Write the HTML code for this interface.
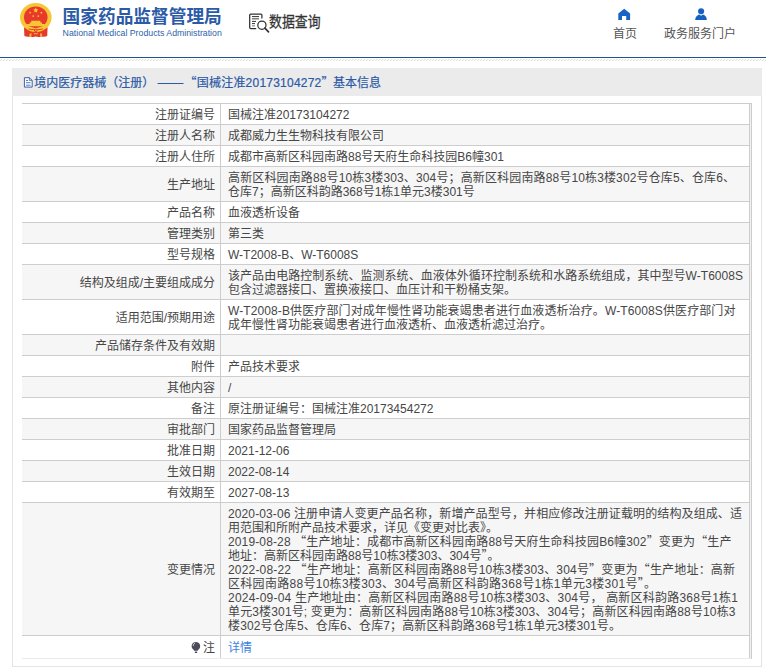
<!DOCTYPE html>
<html lang="zh-CN">
<head>
<meta charset="utf-8">
<title>国家药品监督管理局 数据查询</title>
<style>
html,body{margin:0;padding:0;background:#fff}
body{position:relative;width:766px;height:671px;overflow:hidden;font-family:"Liberation Sans",sans-serif;font-size:12px;line-height:14px;color:transparent}
a{color:transparent;text-decoration:none}
.hd{position:absolute;left:0;top:0;width:766px;height:57px;overflow:hidden;white-space:nowrap}
.hd .logo{position:absolute;left:63px;top:6px;font-size:17px;line-height:20px;font-weight:bold;width:160px;height:20px;overflow:hidden}
.hd .sub{position:absolute;left:62.4px;top:27.8px;font-size:8.8px;line-height:11px;width:159px;height:11px;overflow:hidden}
.hd .dq{position:absolute;left:269px;top:14px;font-size:14px;line-height:16px;width:54px;height:16px;overflow:hidden}
.hd .nav{position:absolute;top:27px;height:14px;overflow:hidden;text-align:center}
.rule{position:absolute;left:0;top:57px;width:766px;height:1px;background:#24528f}
.box{position:absolute;left:12px;top:68px;width:748px;height:598px;border:1px solid #e4e4e4;border-top:0;background:#fff}
.bar{position:absolute;left:-1px;top:0;width:750px;height:27.5px;background:#ebebeb;overflow:hidden;white-space:nowrap}
.bar h1{margin:0;padding:9px 0 0 22px;font-size:12px;line-height:14px;font-weight:normal;height:14px;overflow:hidden}
table{position:absolute;left:9px;top:35px;width:728px;border-collapse:separate;border-spacing:0;table-layout:fixed;border-bottom:1px solid #ebebeb}
th,td{box-sizing:border-box;border-top:1px solid #cdcdcd;border-right:1px solid #cdcdcd;padding:0 5px;font-weight:normal;overflow:hidden;white-space:nowrap;vertical-align:middle;font-size:12px;line-height:14px}
th{width:199px;text-align:right}
td{text-align:left;padding-left:7px}
tr.a th,tr.a td{background:#f6f6f6}
td div,th div{overflow:hidden}
.vr{position:absolute;left:738px;top:35px;width:1px;height:556px;background:#cdcdcd}
.vr0{position:absolute;left:737px;top:36px;width:1px;height:555px;background:#f0f0f0}
.hr0{position:absolute;left:737px;top:35px;width:2px;height:1px;background:#cdcdcd}
svg.ov{position:absolute;left:0;top:0;pointer-events:none}
</style>
</head>
<body>
<div class="hd">
  <div class="logo">国家药品监督管理局</div>
  <div class="sub">National Medical Products Administration</div>
  <div class="dq">数据查询</div>
  <div class="nav" style="left:613px;width:24px">首页</div>
  <div class="nav" style="left:664px;width:72px">政务服务门户</div>
</div>
<div class="rule"></div>
<div class="box">
  <div class="bar"><h1>境内医疗器械（注册）——“国械注准20173104272”基本信息</h1></div>
  <table cellspacing="0" cellpadding="0">
<tr class="" style="height:21px"><th>注册证编号</th><td>国械注准20173104272</td></tr>
<tr class="a" style="height:21px"><th>注册人名称</th><td>成都威力生生物科技有限公司</td></tr>
<tr class="" style="height:21px"><th>注册人住所</th><td>成都市高新区科园南路88号天府生命科技园B6幢301</td></tr>
<tr class="a" style="height:35px"><th>生产地址</th><td>高新区科园南路88号10栋3楼303、304号；高新区科园南路88号10栋3楼302号仓库5、仓库6、<br>仓库7；高新区科韵路368号1栋1单元3楼301号</td></tr>
<tr class="" style="height:21px"><th>产品名称</th><td>血液透析设备</td></tr>
<tr class="a" style="height:21px"><th>管理类别</th><td>第三类</td></tr>
<tr class="" style="height:21px"><th>型号规格</th><td>W-T2008-B、W-T6008S</td></tr>
<tr class="a" style="height:35px"><th>结构及组成/主要组成成分</th><td>该产品由电路控制系统、监测系统、血液体外循环控制系统和水路系统组成，其中型号W-T6008S<br>包含过滤器接口、置换液接口、血压计和干粉桶支架。</td></tr>
<tr class="" style="height:35px"><th>适用范围/预期用途</th><td>W-T2008-B供医疗部门对成年慢性肾功能衰竭患者进行血液透析治疗。W-T6008S供医疗部门对<br>成年慢性肾功能衰竭患者进行血液透析、血液透析滤过治疗。</td></tr>
<tr class="a" style="height:21px"><th>产品储存条件及有效期</th><td></td></tr>
<tr class="" style="height:21px"><th>附件</th><td>产品技术要求</td></tr>
<tr class="a" style="height:21px"><th>其他内容</th><td>/</td></tr>
<tr class="" style="height:21px"><th>备注</th><td>原注册证编号：国械注准20173454272</td></tr>
<tr class="a" style="height:21px"><th>审批部门</th><td>国家药品监督管理局</td></tr>
<tr class="" style="height:21px"><th>批准日期</th><td>2021-12-06</td></tr>
<tr class="a" style="height:21px"><th>生效日期</th><td>2022-08-14</td></tr>
<tr class="" style="height:21px"><th>有效期至</th><td>2027-08-13</td></tr>
<tr class="a" style="height:133px"><th>变更情况</th><td>2020-03-06 注册申请人变更产品名称，新增产品型号，并相应修改注册证载明的结构及组成、适<br>用范围和所附产品技术要求，详见《变更对比表》。<br>2019-08-28 “生产地址：成都市高新区科园南路88号天府生命科技园B6幢302”变更为“生产<br>地址：高新区科园南路88号10栋3楼303、304号”。<br>2022-08-22 “生产地址：高新区科园南路88号10栋3楼303、304号”变更为“生产地址：高新<br>区科园南路88号10栋3楼303、304号高新区科韵路368号1栋1单元3楼301号”。<br>2024-09-04 生产地址由：高新区科园南路88号10栋3楼303、304号， 高新区科韵路368号1栋1<br>单元3楼301号; 变更为：高新区科园南路88号10栋3楼303、304号；高新区科园南路88号10栋3<br>楼302号仓库5、仓库6、仓库7；高新区科韵路368号1栋1单元3楼301号。</td></tr>
<tr class="" style="height:23px"><th>注</th><td><a>详情</a></td></tr>
  </table>
  <div class="vr0"></div><div class="hr0"></div><div class="vr"></div>
</div>
<svg class="ov" aria-hidden="true" width="766" height="671" viewBox="0 0 766 671"><pattern id="hatch" x="0" y="59" width="3" height="2" patternUnits="userSpaceOnUse"><rect x="1" y="0" width="1" height="1" fill="#e0e0e0"/><rect x="0" y="1" width="1" height="1" fill="#e0e0e0"/><rect x="2" y="0" width="1" height="1" fill="#f5f5f5"/><rect x="1" y="1" width="1" height="1" fill="#f5f5f5"/></pattern>
<rect x="0" y="59" width="766" height="2" fill="url(#hatch)"/>
<g id="emblem">
<path d="M24 27.2 L24.4 35.9 Q27 37.2 30 36.4 Q33 37.4 35.8 36.6 Q38.6 37.4 41.6 36.4 Q44.6 37.2 47.2 35.9 L47.6 27.2 Z" fill="#e5392a"/>
<ellipse cx="35.8" cy="17.5" rx="15.8" ry="14.5" fill="#f7c634"/>
<ellipse cx="35.75" cy="17.2" rx="11.8" ry="10.8" fill="#e8392b"/>
<path d="M26.9 24.1 H44.7 V26.2 H26.9 Z M29.6 22.5 H42 V24.1 H29.6 Z M31.2 20.8 H40.4 V22.5 H31.2 Z" fill="#f7c634"/>
<path d="M28.2 28.6 Q35.8 30.2 43.4 28.6 L42.6 29.6 Q35.8 31.1 29 29.6 Z" fill="#e8392b"/>
<circle cx="35.75" cy="30.3" r="1.7" fill="#e8392b"/><circle cx="35.75" cy="30.3" r=".8" fill="#f7c634"/>
<path d="M35.8 7.6 l.8 1.7 1.8.2 -1.35 1.25 .35 1.8 -1.6-.9 -1.6.9 .35-1.8 -1.35-1.25 1.8-.2z" fill="#f7c634"/>
<circle cx="30.2" cy="12.7" r=".9" fill="#f7c634"/><circle cx="41.4" cy="12.7" r=".9" fill="#f7c634"/><circle cx="33.2" cy="16.1" r=".9" fill="#f7c634"/><circle cx="38.3" cy="16.1" r=".9" fill="#f7c634"/>
<path d="M29.4 33.8 L31.6 33.2 L31.4 36.7 L29.6 36.8 Z M42.2 33.8 L40 33.2 L40.2 36.7 L42 36.8 Z M33.6 32.4 L35.8 33.6 L38 32.4 L37.2 34.4 L35.8 33.9 L34.4 34.4 Z" fill="#f3b431"/>
</g>
<g id="dq" fill="none" stroke="#333" stroke-width="1.25" stroke-linecap="butt">
<path d="M261.9 18.6 V15 Q261.9 14 260.9 14 H250.7 Q249.7 14 249.7 15 V27.6 Q249.7 28.6 250.7 28.6 H256.2"/>
<path d="M252 16.6 H259" stroke-width="1"/><path d="M252 18.8 H259" stroke-width="1.4" stroke="#777"/><path d="M252 21.4 H256" stroke-width="1"/><path d="M252 23.6 H255" stroke-width="1"/><path d="M252 25.9 H255" stroke="#777" stroke-width="1"/>
<circle cx="261.9" cy="25.2" r="4.1"/>
<path d="M264.9 28.2 L268.5 31.9" stroke-width="1.7" stroke-linecap="round"/>
</g>
<path id="home" d="M624.2 8.8 L630.1 13.4 V19.9 H626.2 V15.9 H622 V19.9 H618.3 V13.4 Z" fill="#1763c6"/>
<g id="user" fill="#1660c2"><circle cx="701.1" cy="11.2" r="3.05"/><path d="M695.1 20.1 Q695.5 16.2 698.3 14.8 L700.3 14.8 L701.1 16.3 L701.9 14.8 L703.9 14.8 Q706.6 16.2 706.9 20.1 Z"/></g>
<g id="doc"><path d="M24.4 77.7 H29.4 L32.2 80.4 V87.1 H24.4 Z" fill="#fafbfd" stroke="#3c61a8" stroke-width="1"/><path d="M29.4 77.7 V80.4 H32.2" fill="none" stroke="#3c61a8" stroke-width=".8"/><path d="M26 80.5 H28 M26 82.7 H30.5 M26 85.2 H30.5" stroke="#5d7cb8" stroke-width="1" fill="none"/></g>
<path d="M157.6 83.5 H183.5" stroke="#2b5ca8" stroke-width="1" fill="none"/>
<g id="bulb"><path d="M195.9 641.9 a4.25 4.25 0 0 1 2.6 7.6 q-.6 .5 -.7 1.2 h-3.8 q-.1 -.7 -.7 -1.2 a4.25 4.25 0 0 1 2.6 -7.6z" fill="#4b4b59"/><rect x="194.8" y="651.6" width="2.4" height="1.3" rx=".5" fill="#4b4b59"/><path d="M193.2 646 a3 3 0 0 1 2 -2.9" stroke="#e8e8ee" stroke-width=".8" fill="none"/></g>
<g font-family="'Liberation Sans','Noto Sans CJK SC',sans-serif" font-size="12" fill="#464646">
<g text-anchor="end">
<text x="215" y="119">注册证编号</text>
<text x="215" y="140">注册人名称</text>
<text x="215" y="161">注册人住所</text>
<text x="215" y="189">生产地址</text>
<text x="215" y="217">产品名称</text>
<text x="215" y="238">管理类别</text>
<text x="215" y="259">型号规格</text>
<text x="215" y="287">结构及组成/主要组成成分</text>
<text x="215" y="322">适用范围/预期用途</text>
<text x="215" y="350">产品储存条件及有效期</text>
<text x="215" y="371">附件</text>
<text x="215" y="392">其他内容</text>
<text x="215" y="413">备注</text>
<text x="215" y="434">审批部门</text>
<text x="215" y="455">批准日期</text>
<text x="215" y="476">生效日期</text>
<text x="215" y="497">有效期至</text>
<text x="215" y="574">变更情况</text>
<text x="215" y="652">注</text>
</g>
<text x="228" y="119">国械注准20173104272</text>
<text x="228" y="140">成都威力生生物科技有限公司</text>
<text x="228" y="161">成都市高新区科园南路88号天府生命科技园B6幢301</text>
<text x="228" y="182" textLength="507">高新区科园南路88号10栋3楼303、304号；高新区科园南路88号10栋3楼302号仓库5、仓库6、</text>
<text x="228" y="196">仓库7；高新区科韵路368号1栋1单元3楼301号</text>
<text x="228" y="217">血液透析设备</text>
<text x="228" y="238">第三类</text>
<text x="228" y="259">W-T2008-B、W-T6008S</text>
<text x="228" y="280" textLength="515">该产品由电路控制系统、监测系统、血液体外循环控制系统和水路系统组成，其中型号W-T6008S</text>
<text x="228" y="294">包含过滤器接口、置换液接口、血压计和干粉桶支架。</text>
<text x="228" y="315" textLength="507.5">W-T2008-B供医疗部门对成年慢性肾功能衰竭患者进行血液透析治疗。W-T6008S供医疗部门对</text>
<text x="228" y="329">成年慢性肾功能衰竭患者进行血液透析、血液透析滤过治疗。</text>
<text x="228" y="371">产品技术要求</text>
<text x="228" y="392">/</text>
<text x="228" y="413">原注册证编号：国械注准20173454272</text>
<text x="228" y="434">国家药品监督管理局</text>
<text x="228" y="455">2021-12-06</text>
<text x="228" y="476">2022-08-14</text>
<text x="228" y="497">2027-08-13</text>
<text x="228" y="518" textLength="514">2020-03-06 注册申请人变更产品名称，新增产品型号，并相应修改注册证载明的结构及组成、适</text>
<text x="228" y="532">用范围和所附产品技术要求，详见《变更对比表》。</text>
<text x="228" y="546" textLength="503.5">2019-08-28 <tspan font-family="'Noto Sans CJK SC',sans-serif">“</tspan>生产地址：成都市高新区科园南路88号天府生命科技园B6幢302<tspan font-family="'Noto Sans CJK SC',sans-serif">”</tspan>变更为<tspan font-family="'Noto Sans CJK SC',sans-serif">“</tspan>生产</text>
<text x="228" y="560">地址：高新区科园南路88号10栋3楼303、304号<tspan font-family="'Noto Sans CJK SC',sans-serif">”</tspan>。</text>
<text x="228" y="574" textLength="507">2022-08-22 <tspan font-family="'Noto Sans CJK SC',sans-serif">“</tspan>生产地址：高新区科园南路88号10栋3楼303、304号<tspan font-family="'Noto Sans CJK SC',sans-serif">”</tspan>变更为<tspan font-family="'Noto Sans CJK SC',sans-serif">“</tspan>生产地址：高新</text>
<text x="228" y="588" textLength="428">区科园南路88号10栋3楼303、304号高新区科韵路368号1栋1单元3楼301号<tspan font-family="'Noto Sans CJK SC',sans-serif">”</tspan>。</text>
<text x="228" y="602" textLength="510">2024-09-04 生产地址由：高新区科园南路88号10栋3楼303、304号， 高新区科韵路368号1栋1</text>
<text x="228" y="616" textLength="507.5">单元3楼301号; 变更为：高新区科园南路88号10栋3楼303、304号；高新区科园南路88号10栋3</text>
<text x="228" y="630" textLength="393">楼302号仓库5、仓库6、仓库7；高新区科韵路368号1栋1单元3楼301号。</text>
<text x="228" y="652" fill="#3b82e0">详情</text>
<g fill="#2a59a6" stroke="#2a59a6" stroke-width="0.2">
<text x="34.2" y="87.4">境内医疗器械（注册）</text>
<text x="184.5" y="87.4" textLength="149"><tspan font-family="'Noto Sans CJK SC',sans-serif">“</tspan>国械注准20173104272<tspan font-family="'Noto Sans CJK SC',sans-serif">”</tspan></text>
<text x="333" y="87.4">基本信息</text>
</g>
<text x="62.6" y="22.9" font-size="17.7" font-weight="bold" fill="#2b5aa6">国家药品监督管理局</text>
<text transform="translate(269 27) scale(0.85 1)" font-size="15.2" fill="#333" stroke="#333" stroke-width="0.28">数据查询</text>
<text x="62.6" y="36.3" font-size="8.8" fill="#2f5fa9" textLength="159.2" lengthAdjust="spacingAndGlyphs">National Medical Products Administration</text>
<text x="613" y="38" fill="#555">首页</text>
<text x="664" y="38" fill="#555">政务服务门户</text>
</g>
</svg>
</body>
</html>
